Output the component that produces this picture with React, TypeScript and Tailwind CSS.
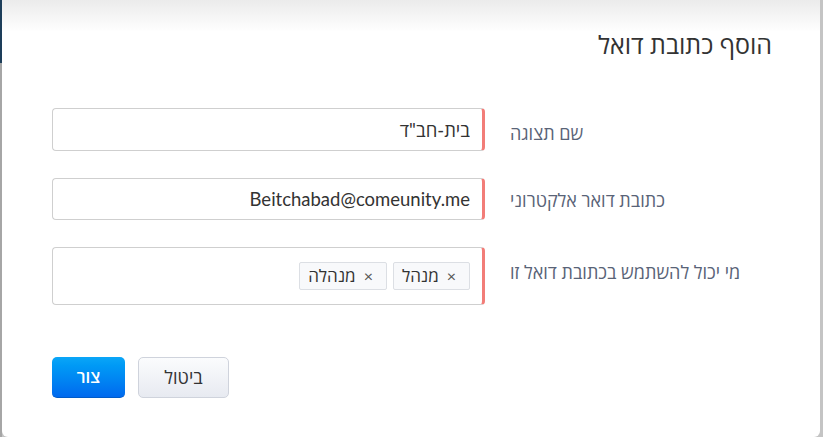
const fieldBase =
    'w-full rounded-[4px] border border-[#cfcfcf] border-r-[3px] border-r-[#f27d78] bg-white px-3 text-[18.5px] text-[#333] outline-none'

const Tag = ({ label }: { label: string }) => (
    <span className="flex h-[28px] items-center gap-2 rounded-[2px] border border-[#dcdfe4] bg-[#f8f9fb] pl-2 pr-[13px] text-[17px] text-[#333]">
        <span className="text-[16px] leading-none text-[#555]">×</span>
        <span>{label}</span>
    </span>
)

const App = () => {
    return (
        <div
            className="h-[437px] w-[823px] overflow-hidden bg-[#c4c4c4] bg-[linear-gradient(to_bottom,#1d3e5a_0px,#1d3e5a_63px,#a6a6a6_63px,#a6a6a6_100%)] bg-[length:2px_100%] bg-no-repeat pl-[2px]"
            style={{ fontFamily: "Lato, 'Open Sans', 'Noto Sans', sans-serif" }}
        >
            <div
                dir="rtl"
                className="flex h-[437px] w-[818px] flex-col rounded-b-[6px] bg-[linear-gradient(to_bottom,#ebebeb_0px,#ffffff_32px)] pl-[50px] pr-[48px]"
            >
                <h2 className="pt-[28px] text-[25px] leading-[32px] font-normal text-[#333]">
                    הוסף כתובת דואל
                </h2>

                <div className="mt-[48px] grid grid-cols-[262px_1fr] gap-x-[25px] gap-y-[27px]">
                    <label className="pt-[13px] text-left text-[18px] leading-[24px] text-[#596377]">
                        שם תצוגה
                    </label>
                    <input
                        readOnly
                        value='בית-חב"ד'
                        className={`${fieldBase} h-[43px]`}
                    />

                    <label className="pt-[10px] text-left text-[18px] leading-[24px] text-[#596377]">
                        כתובת דואר אלקטרוני
                    </label>
                    <input
                        readOnly
                        value="Beitchabad@comeunity.me"
                        className={`${fieldBase} h-[42px]`}
                    />

                    <label className="pt-[13px] text-left text-[18px] leading-[24px] text-[#596377]">
                        מי יכול להשתמש בכתובת דואל זו
                    </label>
                    <div className={`${fieldBase} flex h-[58px] items-center gap-[6px]`}>
                        <Tag label="מנהל" />
                        <Tag label="מנהלה" />
                    </div>
                </div>

                <div className="mt-[52px] flex justify-end gap-[13px]">
                    <button className="h-[41px] w-[91px] rounded-[5px] border border-[#cfd3dc] bg-gradient-to-b from-[#fbfcfd] to-[#e7eaf1] text-[18px] text-[#333]">
                        ביטול
                    </button>
                    <button className="h-[41px] w-[73px] rounded-[5px] border-b border-[#005bc8] bg-gradient-to-b from-[#0ba6f7] to-[#0069ee] text-[17px] font-semibold text-white">
                        צור
                    </button>
                </div>
            </div>
        </div>
    )
}

export default App
